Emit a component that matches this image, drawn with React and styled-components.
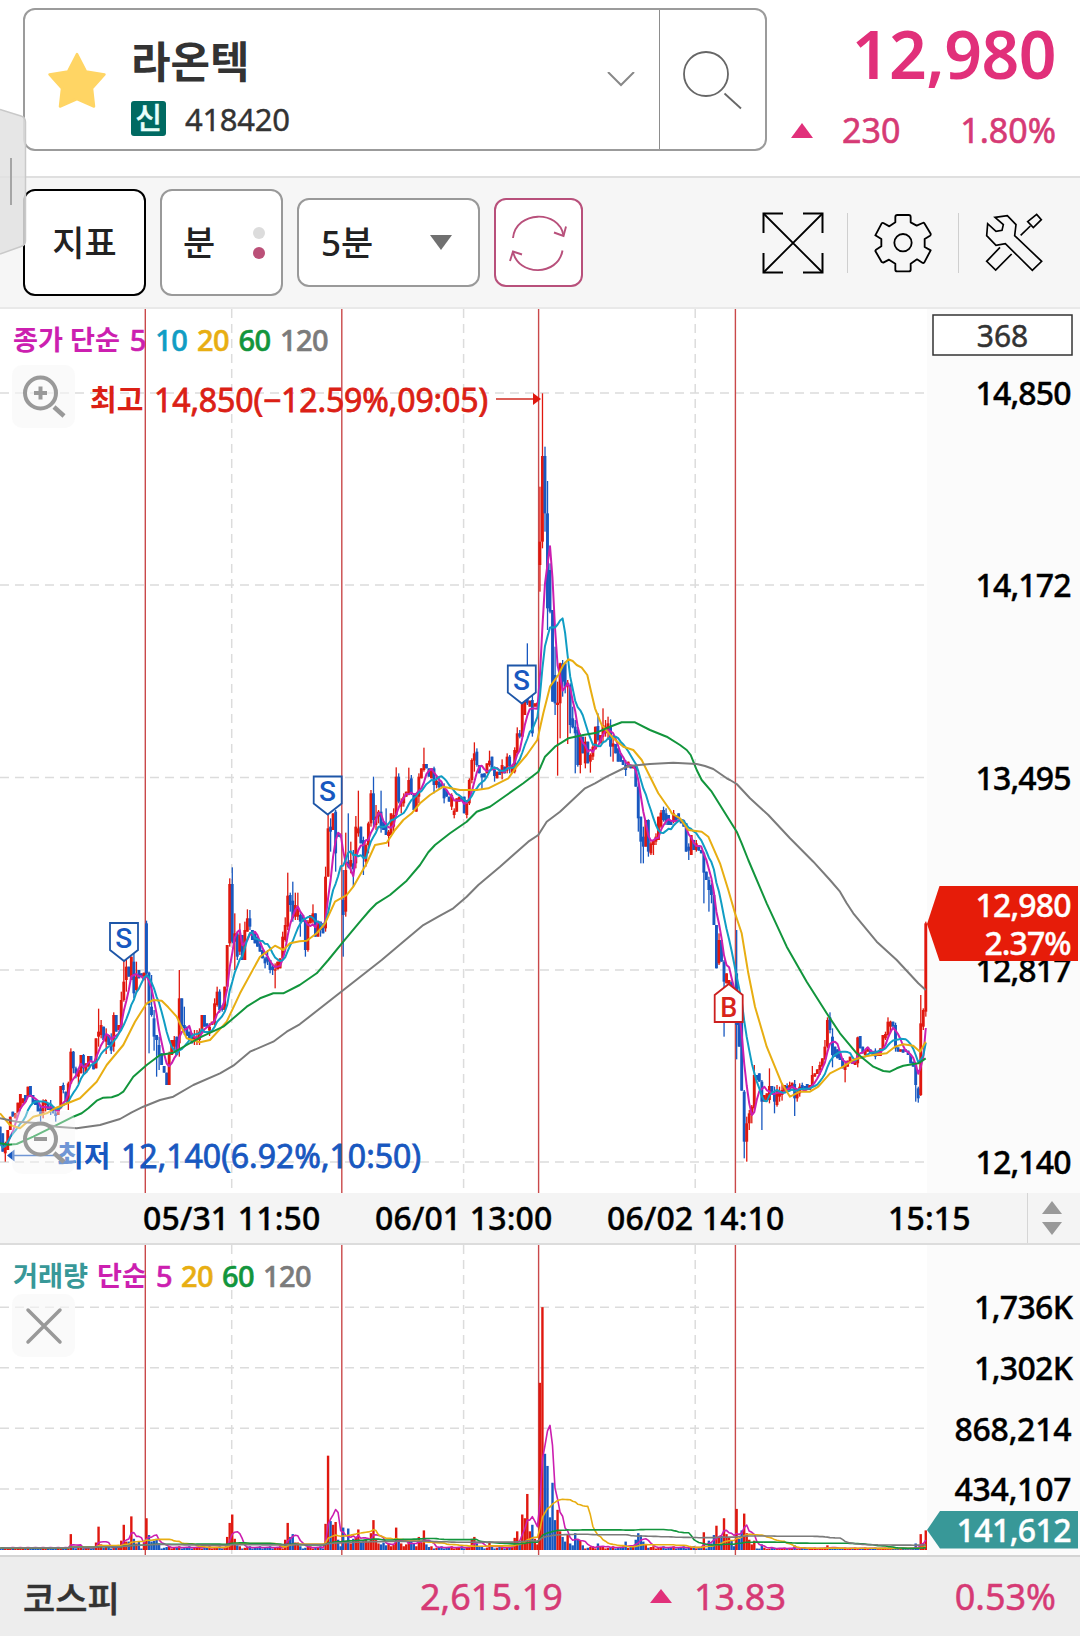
import React from 'react';
import styled, { createGlobalStyle } from 'styled-components';

const GlobalStyle = createGlobalStyle`
  * {
    box-sizing: border-box;
  }

  body {
    margin: 0;
    background: #fff;
    font-family: 'Noto Sans', 'Noto Sans CJK KR', sans-serif;
  }

  svg {
    display: block;
  }
`;

const Screen = styled.div`
  position: relative;
  display: flex;
  flex-direction: column;
  width: 1080px;
  height: 1636px;
  overflow: hidden;
  color: #333;
`;

const Header = styled.header`
  display: flex;
  height: 178px;
  padding: 8px 24px 0 23px;
  border-bottom: 2px solid #dfdfdf;
`;

const StockBox = styled.div`
  display: flex;
  width: 744px;
  height: 143px;
  border: 2px solid #9b9b9b;
  border-radius: 12px;
`;

const StockMain = styled.div`
  display: flex;
  align-items: center;
  flex: 1;
  padding: 0 24px 0 22px;
`;

const StockInfo = styled.div`
  flex: 1;
  padding: 20px 0 0 24px;
`;

const StockName = styled.h1`
  margin: 0;
  font-size: 43px;
  line-height: 58px;
  font-weight: 700;
`;

const StockCode = styled.div`
  display: flex;
  align-items: center;
  gap: 19px;
  height: 56px;
  font-size: 31px;
  letter-spacing: -0.3px;
  -webkit-text-stroke: 0.4px;
`;

const Badge = styled.span`
  width: 35px;
  height: 35px;
  border-radius: 3px;
  background: #006a62;
  color: #e9fffb;
  font-size: 29px;
  line-height: 33px;
  font-weight: 500;
  text-align: center;
`;

const SearchButton = styled.div`
  display: flex;
  align-items: center;
  justify-content: center;
  width: 106px;
  padding-right: 2px;
  border-left: 1px solid #8d8d8d;
`;

const Quote = styled.div`
  flex: 1;
  color: #e1307a;
  text-align: right;
`;

const Price = styled.div`
  height: 88px;
  font-size: 66px;
  line-height: 90px;
  font-weight: 600;
  letter-spacing: -0.5px;
`;

const Change = styled.div`
  display: flex;
  align-items: center;
  height: 68px;
  padding-left: 24px;
  font-size: 34px;
  color: #d63a75;
  -webkit-text-stroke: 0.6px;

  span {
    margin-left: 29px;
  }

  span:last-child {
    margin-left: auto;
  }
`;

const Toolbar = styled.div`
  display: flex;
  align-items: center;
  height: 131px;
  padding: 0 37px 0 23px;
  background: #f6f6f6;
  border-bottom: 2px solid #e9e9e9;
`;

const ToolButton = styled.div`
  display: flex;
  align-items: center;
  justify-content: ${props => props.$justify || 'center'};
  width: ${props => props.$width}px;
  height: ${props => props.$height || 107}px;
  margin-right: 14px;
  padding: ${props => props.$padding || 0};
  border: 2px solid ${props => props.$border || '#999'};
  border-radius: 12px;
  background: #fff;
  color: #222;
  font-size: 35px;
  line-height: 50px;
  font-weight: 500;
`;

const Dots = styled.div`
  display: flex;
  flex-direction: column;
  gap: 8px;
`;

const Dot = styled.i`
  width: 12px;
  height: 12px;
  border-radius: 50%;
  background: ${props => props.$color};
`;

const IconGroup = styled.div`
  display: flex;
  align-items: center;
  margin-left: auto;
`;

const Separator = styled.div`
  width: 1px;
  height: 60px;
  margin: 0 ${props => props.$right}px 0 ${props => props.$left}px;
  background: #cfcfcf;
`;

const Panel = styled.section`
  position: relative;
  height: ${props => props.$height}px;
`;

const Legend = styled.div`
  position: absolute;
  top: ${props => props.$top}px;
  left: 13px;
  display: flex;
  gap: ${props => props.$gap}px;
  line-height: 40px;
`;

const LegendItem = styled.span`
  color: ${props => props.$color};
  font-size: ${props => (props.$label ? 27.2 : 29)}px;
  font-weight: ${props => (props.$label ? 700 : 500)};
  letter-spacing: ${props => (props.$label ? 0 : -0.6)}px;
  -webkit-text-stroke: ${props => (props.$label ? 0 : 0.6)}px;
`;

const ChartButton = styled.div`
  position: absolute;
  top: ${props => props.$top}px;
  left: 12px;
  width: 63px;
  height: 63px;
  border-radius: 10px;
  background: rgba(246, 246, 246, ${props => props.$alpha || 0.6});
`;

const TimeAxis = styled.div`
  display: grid;
  grid-template-columns: 232px 232px 281px 1fr 53px;
  align-items: center;
  height: 52px;
  padding-left: 143px;
  background: #f4f4f4;
  border-bottom: 2px solid #dcdcdc;
  color: #000;
  font-size: 32px;
  font-weight: 500;
  letter-spacing: 0.15px;
  line-height: 46px;
  white-space: nowrap;
  -webkit-text-stroke: 0.4px;
`;

const Sorter = styled.div`
  display: flex;
  flex-direction: column;
  align-items: center;
  justify-content: center;
  gap: 8px;
  height: 50px;
  padding-right: 5px;
  border-left: 1px solid #d5d5d5;
`;

const Footer = styled.footer`
  display: grid;
  grid-template-columns: 397px 230px 44px 1fr auto;
  align-items: center;
  flex: 1;
  padding: 0 24px 1px 23px;
  border-top: 2px solid #d4d4d4;
  background: #ededed;
  color: #d63a75;
  font-size: 36px;
  -webkit-text-stroke: 0.5px;
`;

const IndexName = styled.span`
  color: #333;
  font-size: 35px;
  font-weight: 500;
`;

const Handle = styled.div`
  position: absolute;
  top: 108px;
  left: 0;
`;

const COLORS = {
  up: '#e0180f',
  down: '#1858c0',
  ma5: '#cc1fb0',
  ma10: '#109dc4',
  ma20: '#e8ae12',
  ma60: '#12953c',
  ma120: '#7b7b7b'
};

const STEP = 2.522;
const barX = i => 0.2 + i * STEP;

// direction, body top, body bottom, wick top, wick bottom (in thirds of a pixel below `top`)
const SESSIONS = [
  {
    top: 780,
    bars: `d 1040 1090|d 1060 1115|u 1090 1120 1085 1145|u 1050 1110|u 1010 1050|d 995 1010|u 1000 1015|u 968 1000
      |u 942 985|u 955 970|d 945 965|u 920 950|d 918 950|d 945 970|d 960 975|d 965 995|d 985 1005 975 1025|u 965 1005 958 1015
      |u 960 975 958 995|d 970 990|d 980 990 960 1005|d 985 1000|d 1000 1008 990 1025|u 985 1005|u 918 985|d 915 930 908 940|d 935 965
      |u 910 965 905 990|u 815 910 805 912|d 815 865 813 880|d 865 880 860 895|u 870 890 865 912|u 825 880|d 825 865 822 885|u 850 878
      |u 828 860|d 828 845|d 845 868|u 775 865|u 755 770 686 800|u 735 765 720 775|d 740 780|u 765 785 745 822|d 765 795
      |d 785 812 760 822|u 705 800 697 815|d 705 755|u 735 750|u 660 745 635 750|u 605 660 540 665|u 560 600 540 635|d 560 590
      |u 530 600|d 545 640 520 655|u 590 630 545 640|d 570 595|d 580 590|u 578 590|d 430 580 422 585|d 578 675 575 820
      |d 680 705 585 710|d 715 770 690 812|d 765 780 765 890|d 795 825 770 870|d 820 855|d 858 878|d 878 915|u 820 915 815 915
      |u 780 825|u 780 800 768 815|d 770 825|u 655 790 570 830|d 655 740|d 735 745 680 765|d 740 768|d 755 780|d 760 790
      |u 770 785 750 795|u 770 780 750 795|u 755 780 745 795|u 705 760|d 705 740|d 730 740|u 740 752 730 768|u 725 735|u 670 730 655 735
      |u 635 675 620 680|d 635 690 628 698|d 680 690 675 695|u 620 690|u 495 620|u 312 490 295 500|d 312 485 262 490
      |u 460 485 400 570|d 460 530 460 540|u 465 515 430 525|d 465 540|u 450 540 425 540|u 415 455 388 455|d 415 440 390 450
      |d 450 480|d 460 490|d 470 500|d 490 515|d 510 535|d 535 550 530 565|d 530 545 510 555|d 540 570 540 580|d 560 570 550 585
      |u 568 572 550 625|u 545 568|u 535 565|u 470 535 455 540|u 435 480 412 485|u 347 440 278 450|d 345 375 338 395|d 362 415 305 425
      |u 375 410 338 420|u 385 410 338 420`
  },
  {
    top: 640,
    bars: `d 825 845 820 890|d 825 845|d 840 930 835 950|u 845 930 840 935|u 825 850|u 820 845 793 850|d 820 890|u 845 890
      |d 845 870 845 890|d 850 880|u 710 865 680 875|u 565 710 520 710|d 560 575 535 635|u 520 570|d 515 640 510 695|d 580 590 |d 585 592
      |d 780 825 690 950|u 690 815 578 830|d 665 680 520 685|u 660 680 605 700|d 670 688 630 740|u 560 670 528 685|u 565 580 452 590
      |d 560 610|d 600 655 590 705|u 615 665 610 680|u 550 615 545 640|u 460 550 450 560|d 460 540 410 560|u 530 555 495 570|u 515 530 510 550
      |d 515 565 452 578|d 545 570|d 560 585 505 585|u 575 588 570 620|u 520 585|u 525 560 505 575|u 410 525 382 530|d 410 485 400 490
      |u 485 500 475 520|u 470 490 460 500|u 455 470|u 420 460 383 465|d 415 460 405 465|d 465 510|u 460 515|u 410 470 400 490|u 385 415
      |u 372 390 323 395|d 372 385|d 385 410|u 385 415|d 385 435 380 460|u 422 435 405 445|d 425 442 410 450|d 430 440
      |d 445 475 430 490|d 450 470|d 470 485|u 465 500 460 510|u 512 525 505 535|u 475 515|u 470 485|d 472 482|d 470 520
      |u 490 525 480 535|u 420 490 415 495|u 360 420 355 430|u 340 362 307 395|d 335 375 325 380|d 375 400|d 402 412 400 450|d 400 412
      |u 370 400|u 362 375 332 380|d 350 385|d 390 408 380 425|u 395 415|d 395 405|u 375 400 358 418|d 380 400|u 350 392 340 400
      |d 350 378 345 400|u 378 398|u 330 395 322 400|u 280 340 262 345|d 280 290 270 295|u 190 290|u 185 225|d 175 190 10 195
      |u 182 200|d 180 280 165 290|u 190 200|u 188 200`
  },
  {
    top: 380,
    bars: `u 485 555 320 635|u 228 485 40 505|d 228 400 200 455|d 400 685 303 750|d 570 695 550 700|d 690 965|d 885 970 800 1005
      |u 968 975 905 1187|u 850 970 848 1075|d 850 905 840 950|d 850 920 845 940|u 908 918 900 1092|d 915 1035 910 1060|d 1015 1042 980 1045
      |d 1040 1060 1020 1180|d 1050 1155 1045 1160|u 1065 1155 1060 1180|d 1070 1120|u 1085 1150 1070 1165|d 1085 1150|u 1125 1145 1120 1178
      |u 1100 1130 1090 1140|u 1040 1108|d 1038 1080 1000 1085|u 1065 1090|u 1035 1070 985 1090|u 1040 1060 1020 1070
      |u 1030 1050 1010 1080|d 1040 1100 1018 1130|u 1090 1100 1065 1145|d 1092 1120|d 1105 1145|d 1120 1145|d 1140 1155|d 1155 1170 1140 1188
      |u 1145 1162|d 1155 1165|u 1155 1165|d 1158 1220|d 1220 1315 1210 1355|d 1310 1385 1310 1450|d 1370 1400 1340 1450
      |u 1320 1400|d 1320 1415 1318 1430|u 1390 1420 1385 1425|u 1380 1395 1380 1425|u 1370 1385 1360 1395|u 1310 1380|u 1298 1340 1290 1345
      |d 1290 1320 1280 1325|d 1300 1325 1285 1335|d 1305 1335|d 1320 1335|u 1300 1325 1290 1330|d 1305 1320|d 1300 1318|d 1318 1330
      |d 1320 1340|d 1330 1415|d 1400 1412 1390 1440|u 1365 1425|d 1380 1410|u 1390 1410 1380 1415|d 1395 1412|d 1410 1420`
  },
  {
    top: 780,
    bars: `d 220 278 215 370|d 275 300|d 300 330 290 395|d 315 345 310 370|d 345 435|d 435 565|u 480 550 460 555|d 480 545|d 545 605 540 770
      |u 580 610|u 600 620|d 605 640|d 625 700|d 580 735 450 838|d 690 800|d 720 932|d 935 1085 930 1135|u 1030 1085 1010 1145|u 1000 1030 990 1050
      |u 980 1005 975 1030|u 885 985 855 990|d 885 900|d 880 905|d 905 965 900 1050|u 945 965|u 940 960|u 918 960 865 970|d 918 940
      |d 940 965 920 1000|u 930 975 915 980|u 935 950 920 965|u 930 945 910 962|u 915 935|d 918 930 910 935|u 915 930 905 935|u 908 925
      |d 912 955 900 1008|u 935 955 930 965|u 920 940 910 950|d 915 925 908 930|d 918 928|d 912 930|u 915 930|u 885 918 858 920|u 880 890
      |u 868 882|u 855 870 845 885|u 835 860|u 800 838 780 840|u 720 800 712 805|d 712 750 697 760|d 770 825 745 862|d 800 830|d 808 835
      |d 820 840|d 835 865|u 855 870 845 907|u 842 860|u 830 845|d 840 852|u 840 855|u 772 850 770 862|d 768 805|d 800 820|u 810 825
      |u 802 815|d 808 820|d 815 825|d 812 830 805 838|u 815 828|u 805 828|u 765 808|u 762 775 755 780|u 725 765 712 770|u 725 740 722 760
      |d 725 740|d 735 805 728 815|d 802 815|u 808 815|d 808 818|d 808 815|d 812 825|d 825 850|d 845 860|d 855 915 850 965|d 925 955 920 968
      |u 730 945 645 948|u 690 740 685 750|u 430 695 425 710`
  }
];

const candles = SESSIONS.flatMap(({ top, bars }) =>
  bars.split('|').map(row => {
    const [dir, ...rest] = row.trim().split(/\s+/);
    const [a, b, hi = a, lo = b] = rest.map(v => top + Number(v) / 3);
    return { up: dir === 'u', top: a, bottom: b, high: hi, low: lo, close: dir === 'u' ? a : b };
  })
);

const average = (values, period) =>
  values
    .map((_, i) => {
      const part = values.slice(Math.max(0, i - period + 1), i + 1);
      return part.reduce((sum, v) => sum + v, 0) / part.length;
    });

const toPoints = values => values.map((v, i) => `${barX(i).toFixed(1)},${v.toFixed(1)}`).join(' ');

// long averages reach back before the first visible bar, so they come as points
const LONG_LINES = {
  ma20: [
    [0, 780, '0,1000 30,1035 60,1045 100,1010 140,1000 165,985 240,955 290,905 320,855 370,795 405,725 440,670 460,660 485,662 505,682 530,710 560,775 600,787 630,780 680,725 720,640 780,530 825,497 850,510 870,490 899,484'],
    [280, 640, '80,902 110,880 135,850 165,785 200,765 220,740 260,670 285,615 320,608 345,570 370,540 395,520 420,490 450,465 490,440 540,450 590,450 625,445 685,415 710,380 740,345 772,300'],
    [500, 380, '130,1000 150,920 175,885 190,855 205,838 218,843 230,855 245,863 262,885 272,930 285,985 305,1035 340,1075 370,1100 400,1110 425,1140 445,1180 475,1240 510,1290'],
    [640, 780, '95,100 120,115 145,150 185,155 205,170 240,250 265,330 285,400 305,460 325,580 345,680 380,800 425,910 450,950 480,935 510,935 535,920 570,880 610,860 640,840 670,830 700,825 740,820 765,800 790,793 820,797 840,815 857,785']
  ],
  ma60: [
    [0, 780, '0,1090 25,1094 50,1092 100,1070 150,1045 220,1010 245,1000 265,985 290,962 310,953 335,952 355,945 370,935 400,890 440,855 480,825 520,818 560,795 605,770 670,740 700,715 740,680 780,655 820,640 850,640 899,615'],
    [280, 640, '110,1000 145,960 190,905 240,845 270,810 290,790 330,765 380,722 420,675 445,637 465,615 510,580 560,545 590,515 630,500 680,465 730,430 775,395'],
    [500, 380, '122,1160 135,1130 165,1100 205,1075 250,1065 290,1058 330,1040 365,1027 405,1027 450,1050 500,1070 540,1095 560,1110 572,1125 590,1170'],
    [640, 780, '185,0 215,35 290,155 305,190 325,240 380,370 440,500 500,605 560,700 600,760 650,820 700,860 730,873 750,875 770,865 790,857 835,850 857,835']
  ],
  ma120: [
    [0, 780, '0,1015 50,1025 120,1030 170,1040 230,1045 300,1035 360,1017 395,997 430,980 480,960 520,950 580,915 660,880 700,857 750,815 820,785 860,755 899,733'],
    [280, 640, '305,960 370,905 430,855 475,830 520,805 560,770 595,735 660,680 745,605 775,585 800,545 840,515 899,460'],
    [500, 380, '255,1225 285,1210 320,1190 385,1158 450,1152 520,1148 590,1152 615,1158 640,1167 680,1195'],
    [640, 780, '270,0 290,12 330,55 385,105 450,175 520,245 570,300 600,335 620,370 640,400 710,485 770,540 835,610 857,630']
  ]
};

const joinPieces = pieces =>
  pieces
    .flatMap(([x0, y0, text]) =>
      text.split(' ').map(pair => {
        const [x, y] = pair.split(',').map(Number);
        return `${(x0 + x / 3).toFixed(1)},${(y0 + y / 3).toFixed(1)}`;
      })
    )
    .join(' ');

const VOLUME_PEAKS = {
  28: 17, 38: 8, 39: 25, 40: 6, 48: 10, 49: 27, 50: 9, 51: 9, 52: 36, 53: 12, 54: 7, 55: 9, 57: 8, 58: 34, 59: 16, 60: 9, 61: 10, 62: 12,
  63: 7, 90: 14, 91: 29, 92: 38, 93: 12, 94: 5, 113: 11, 114: 29, 115: 14, 116: 17, 117: 8, 118: 8, 129: 28, 130: 101, 131: 31, 132: 27,
  133: 30, 134: 11, 135: 4, 136: 24, 137: 10, 138: 23, 139: 7, 140: 12, 141: 13, 142: 22, 143: 9, 144: 10, 145: 11, 146: 9, 147: 18, 148: 32,
  149: 12, 150: 7, 157: 24, 158: 9, 162: 9, 163: 9, 164: 7, 166: 14, 168: 21, 169: 6, 187: 12, 188: 14, 189: 7, 194: 9, 204: 13, 205: 20, 206: 8,
  207: 38, 208: 34, 209: 60, 210: 20, 211: 27, 212: 12, 213: 6, 214: 179, 215: 260, 216: 103, 217: 90, 218: 35, 219: 72, 220: 32, 221: 43,
  222: 20, 223: 14, 224: 9, 225: 17, 226: 7, 227: 5, 228: 18, 229: 11, 230: 10, 231: 5, 237: 7, 248: 9, 252: 11, 253: 18, 254: 16, 255: 9,
  256: 6, 279: 19, 281: 10, 282: 7, 283: 16, 284: 26, 285: 13, 286: 15, 287: 34, 288: 17, 289: 13, 290: 10, 292: 44, 293: 12, 294: 21, 295: 39,
  296: 18, 297: 11, 298: 6, 299: 10, 302: 6, 315: 5, 328: 5, 363: 7, 365: 17, 366: 7, 367: 21
};

const RED_VOLUME = [28, 39, 52, 58, 92, 133, 148, 157, 168, 188, 209, 279, 284, 287, 292, 295];

const volumes = candles.map((_, i) => {
  if (VOLUME_PEAKS[i]) return VOLUME_PEAKS[i];
  if (i < 36) return 1.8 + (i % 3) * 0.6;
  if (i > 300) return 1 + (i % 4) * 0.5;
  if (i > 135 && i < 170) return 4 + ((i * 7) % 5);
  return 1.6 + ((i * 5) % 4) * 0.8;
});

const VOLUME_BASE = 1550;
const volumeY = v => VOLUME_BASE - v * 0.934;

const DAY_LINES = [145.3, 341.8, 538.6, 735.4];
const TIME_LINES = [231.7, 463.6, 695.2];

const GridLines = ({ rows, top, bottom }) => (
  <g stroke="#dcdcdc" strokeWidth="1.5" strokeDasharray="9 6">
    {rows.map(y => <line key={y} x1="0" x2="927" y1={y} y2={y} />)}
    {TIME_LINES.map(x => <line key={x} x1={x} x2={x} y1={top} y2={bottom} />)}
  </g>
);

const DayLines = ({ top, bottom }) => (
  <g stroke="#c9494a" strokeWidth="1.4">
    {DAY_LINES.map(x => <line key={x} x1={x} x2={x} y1={top} y2={bottom} />)}
  </g>
);

const Line = ({ points, color, width = 2 }) => (
  <polyline points={points} fill="none" stroke={color} strokeWidth={width} strokeLinejoin="round" />
);

const AxisText = ({ y, children, right = 1071.5, length = 96, color = '#000' }) => (
  <text x={right - length} y={y} fontSize="32" fontWeight="500" fill={color} stroke={color} strokeWidth="0.4" textLength={length}>
    {children}
  </text>
);

const SellMark = ({ x, y }) => (
  <g>
    <path d={`M${x - 14} ${y} h28 v27 l-14 11 l-14 -11 z`} fill="#fff" stroke="#1e56a8" strokeWidth="1.8" />
    <text x={x - 0.3} y={y + 24.5} fontSize="28" fontWeight="500" textAnchor="middle" fill={COLORS.down} fontFamily="Roboto, sans-serif">S</text>
  </g>
);

const BuyMark = ({ x, y }) => (
  <g>
    <path d={`M${x} ${y} l14 11 v27 h-28 v-27 z`} fill="#fff" stroke="#cc2020" strokeWidth="1.8" />
    <text x={x} y={y + 33} fontSize="27" fontWeight="500" textAnchor="middle" fill="#d8241b" fontFamily="Roboto, sans-serif">B</text>
  </g>
);

const PriceChart = () => {
  const closes = candles.map(c => c.close);

  return (
    <svg width="1080" height="884" viewBox="0 309 1080 884">
      <GridLines rows={[393, 585, 777.5, 970, 1162]} top={309} bottom={1193} />
      <rect x="927" y="309" width="153" height="884" fill="#fbfbfb" />
      <DayLines top={309} bottom={1193} />
      {candles.map((c, i) => (
        <g key={i} fill={c.up ? COLORS.up : COLORS.down}>
          <rect x={barX(i) - 0.6} y={c.high} width="1.3" height={c.low - c.high} />
          <rect x={barX(i) - 1.45} y={c.top} width="2.9" height={Math.max(1, c.bottom - c.top)} />
        </g>
      ))}
      <Line points={toPoints(average(closes, 5))} color={COLORS.ma5} />
      <Line points={toPoints(average(closes, 10))} color={COLORS.ma10} />
      <Line points={joinPieces(LONG_LINES.ma20)} color={COLORS.ma20} />
      <Line points={joinPieces(LONG_LINES.ma60)} color={COLORS.ma60} />
      <Line points={joinPieces(LONG_LINES.ma120)} color={COLORS.ma120} />

      <text x="90" y="411" fontSize="29" fontWeight="700" fill="#db2015">최고</text>
      <text x="154" y="412" fontSize="32" fill="#db2015" stroke="#db2015" strokeWidth="0.8" textLength="334">14,850(−12.59%,09:05)</text>
      <path d="M496 399 H534" stroke="#d02a20" strokeWidth="1.4" />
      <path d="M533 393 L541 399 L533 405 Z" fill="#e0180f" />

      <text x="57" y="1167" fontSize="29" fontWeight="700" fill={COLORS.down}>최저</text>
      <text x="121" y="1168" fontSize="32" fill={COLORS.down} stroke={COLORS.down} strokeWidth="0.8" textLength="300">12,140(6.92%,10:50)</text>
      <path d="M14 1155.5 H54" stroke={COLORS.down} strokeWidth="1.4" />
      <path d="M14.5 1149.5 L7 1155.5 L14.5 1161.5 Z" fill={COLORS.down} />

      <SellMark x={124} y={923} />
      <SellMark x={327.7} y={776.5} />
      <SellMark x={521.8} y={665.5} />
      <BuyMark x={728.7} y={984} />

      <rect x="933" y="315" width="139" height="40" fill="#fff" stroke="#333" strokeWidth="1.5" />
      <text x="1002.5" y="347" fontSize="30" textAnchor="middle" fill="#333" stroke="#333" strokeWidth="0.5">368</text>
      <AxisText y={404.5}>14,850</AxisText>
      <AxisText y={597}>14,172</AxisText>
      <AxisText y={789.5}>13,495</AxisText>
      <AxisText y={981.5}>12,817</AxisText>
      <AxisText y={1173.5}>12,140</AxisText>
      <path d="M927 924 L939.5 886 H1078 V961 H939.5 Z" fill="#e61c09" />
      <AxisText y={916.5} color="#fff">12,980</AxisText>
      <AxisText y={954.5} color="#fff" length={87}>2.37%</AxisText>
    </svg>
  );
};

const VolumeChart = () => (
  <svg width="1080" height="310" viewBox="0 1245 1080 310">
    <GridLines rows={[1307.3, 1367.7, 1428.3, 1489]} top={1245} bottom={1555} />
    <rect x="927" y="1245" width="153" height="310" fill="#fbfbfb" />
    <DayLines top={1245} bottom={1555} />
    {volumes.map((v, i) => (
      <rect
        key={i}
        x={barX(i) - 1.2}
        y={volumeY(v)}
        width="2.4"
        height={VOLUME_BASE - volumeY(v)}
        fill={candles[i].up || RED_VOLUME.includes(i) ? COLORS.up : COLORS.down}
      />
    ))}
    <Line points={toPoints(average(volumes, 5).map(volumeY))} color={COLORS.ma5} width={1.6} />
    <Line points={toPoints(average(volumes, 20).map(volumeY))} color={COLORS.ma20} width={1.6} />
    <Line points={toPoints(average(volumes, 60).map(volumeY))} color={COLORS.ma60} width={1.6} />
    <Line points={toPoints(average(volumes, 120).map(volumeY))} color={COLORS.ma120} width={1.6} />
    <AxisText y={1319} right={1073} length={99}>1,736K</AxisText>
    <AxisText y={1380} right={1073} length={99}>1,302K</AxisText>
    <AxisText y={1441} length={117}>868,214</AxisText>
    <AxisText y={1501} length={117}>434,107</AxisText>
    <path d="M927 1530 L940 1511 H1078 V1548.5 H940 Z" fill="#389898" />
    <AxisText y={1541.5} length={115} color="#fff">141,612</AxisText>
  </svg>
);

const Triangle = ({ width, height, color, down }) => (
  <svg width={width} height={height}>
    <path d={down ? `M0 0 H${width} L${width / 2} ${height} Z` : `M0 ${height} H${width} L${width / 2} 0 Z`} fill={color} />
  </svg>
);

const StarIcon = () => (
  <svg width="60" height="58" viewBox="0 0 60 58">
    <path
      d="M30 3 L39 20.5 L57.5 23.5 L45 37.5 L47 55.5 L30 48 L13 55.5 L15 37.5 L2.5 23.5 L21 20.5 Z"
      fill="#ffd564"
      stroke="#ffd564"
      strokeWidth="2.5"
      strokeLinejoin="round"
    />
  </svg>
);

const SearchIcon = () => (
  <svg width="60" height="60" viewBox="0 0 60 60" fill="none" stroke="#666" strokeWidth="1.8">
    <circle cx="24" cy="24" r="22" />
    <path d="M42.5 43.5 L59 58.5" />
  </svg>
);

const RefreshIcon = () => (
  <svg width="60" height="58" viewBox="510 213.5 60 58" fill="none" stroke="#b8507b" strokeWidth="1.9">
    <path d="M514 237.5 C517 210 560 209 564.5 235" />
    <path d="M555 232 L564.5 235.5 L567 226" />
    <path d="M563.5 250 C559 276 519 276 514 251" />
    <path d="M511 260.5 L514 251 L523 254" />
  </svg>
);

const ExpandIcon = () => (
  <svg width="62" height="62" viewBox="0 0 62 62" fill="none" stroke="#000" strokeWidth="2">
    <path d="M1.5 21 V1.5 H21 M41 1.5 H60.5 V21 M60.5 41 V60.5 H41 M21 60.5 H1.5 V41" />
    <path d="M1.5 1.5 L60.5 60.5 M60.5 1.5 L1.5 60.5" strokeWidth="1.8" />
  </svg>
);

const GearIcon = () => (
  <svg width="58" height="60" viewBox="940 640 174 180" fill="none" stroke="#000" strokeWidth="5.5" strokeLinejoin="round">
    <path d="M1004 668 V652 q0-6 6-6 H1044 q6 0 6 6 V668 L1068 678 L1086 670 q3-2 5 1 L1110 702 q1 4-2 6 L1092 718 V742 L1110 752 L1091 788 q-3 3-6 1 L1069 779 L1050 792 V810 q0 5-6 5 H1010 q-6 0-6-5 V792 L985 780 L968 789 L963 787 L944 754 L946 750 L962 740 V718 L944 707 L963 671 q2-2 5-1 L986 680 Z" />
    <circle cx="1027" cy="729" r="26" />
  </svg>
);

const ToolsIcon = () => (
  <svg width="58" height="60" viewBox="1275 640 174 180" fill="none" stroke="#000" strokeWidth="5">
    <path d="M1305 653 L1342 648 L1368 675 L1364 708 L1445 785 L1417 812 L1336 732 L1308 737 L1280 708 L1283 672 L1308 695 L1326 692 L1330 675 Z" />
    <path d="M1382 707 L1411 679" />
    <path d="M1403 666 L1430 644 L1444 660 L1420 684 Z" />
    <path d="M1320 743 L1280 785 L1307 811 L1355 763" />
  </svg>
);

const ZoomIcon = ({ plus }) => (
  <svg width="63" height="63" viewBox="0 0 63 63" fill="none" stroke="#999" strokeWidth="4">
    <circle cx="28.5" cy="28" r="15.5" />
    <path d={plus ? 'M22 28 H35 M28.5 21.5 V34.5' : 'M22 28 H35'} />
    <path d="M42 42 L52 51" strokeWidth="4.5" />
  </svg>
);

const App = () => {
  return (
    <Screen>
      <GlobalStyle />
      <Header>
        <StockBox>
          <StockMain>
            <StarIcon />
            <StockInfo>
              <StockName>라온텍</StockName>
              <StockCode>
                <Badge>신</Badge>
                418420
              </StockCode>
            </StockInfo>
            <svg width="28" height="16" viewBox="0 0 28 16" fill="none" stroke="#888" strokeWidth="2">
              <path d="M1 0 L14 13 L27 0" />
            </svg>
          </StockMain>
          <SearchButton>
            <SearchIcon />
          </SearchButton>
        </StockBox>
        <Quote>
          <Price>12,980</Price>
          <Change>
            <Triangle width={22} height={15} color="#e1307a" />
            <span>230</span>
            <span>1.80%</span>
          </Change>
        </Quote>
      </Header>

      <Toolbar>
        <ToolButton $width={123} $border="#000">
          <span>지표</span>
        </ToolButton>
        <ToolButton $width={123} $justify="space-between" $padding="0 16px 0 21px">
          <span>분</span>
          <Dots>
            <Dot $color="#dcdcdc" />
            <Dot $color="#bb5078" />
          </Dots>
        </ToolButton>
        <ToolButton $width={183} $height={89} $justify="space-between" $padding="0 26px 0 22px">
          <span>5분</span>
          <Triangle width={22} height={15} color="#707070" down />
        </ToolButton>
        <ToolButton $width={89} $height={89} $border="#b8507b">
          <RefreshIcon />
        </ToolButton>
        <IconGroup>
          <ExpandIcon />
          <Separator $left={23} $right={26} />
          <GearIcon />
          <Separator $left={26} $right={26} />
          <ToolsIcon />
        </IconGroup>
      </Toolbar>

      <Panel $height={884}>
        <PriceChart />
        <Legend $top={11} $gap={9.6}>
          <LegendItem $label $color={COLORS.ma5}>종가 단순</LegendItem>
          <LegendItem $color={COLORS.ma5}>5</LegendItem>
          <LegendItem $color={COLORS.ma10}>10</LegendItem>
          <LegendItem $color={COLORS.ma20}>20</LegendItem>
          <LegendItem $color={COLORS.ma60}>60</LegendItem>
          <LegendItem $color={COLORS.ma120}>120</LegendItem>
        </Legend>
        <ChartButton $top={56}>
          <ZoomIcon plus />
        </ChartButton>
        <ChartButton $top={802} $alpha={0.4}>
          <ZoomIcon />
        </ChartButton>
      </Panel>

      <TimeAxis>
        <span>05/31 11:50</span>
        <span>06/01 13:00</span>
        <span>06/02 14:10</span>
        <span>15:15</span>
        <Sorter>
          <Triangle width={20} height={13} color="#999" />
          <Triangle width={20} height={13} color="#999" down />
        </Sorter>
      </TimeAxis>

      <Panel $height={310}>
        <VolumeChart />
        <Legend $top={11} $gap={9}>
          <LegendItem $label $color="#389898">거래량</LegendItem>
          <LegendItem $label $color={COLORS.ma5}>단순</LegendItem>
          <LegendItem $color={COLORS.ma5}>5</LegendItem>
          <LegendItem $color={COLORS.ma20}>20</LegendItem>
          <LegendItem $color={COLORS.ma60}>60</LegendItem>
          <LegendItem $color={COLORS.ma120}>120</LegendItem>
        </Legend>
        <ChartButton $top={49}>
          <svg width="63" height="63" viewBox="0 0 63 63" stroke="#999" strokeWidth="3.5" strokeLinecap="round">
            <path d="M16 16 L48 48 M48 16 L16 48" />
          </svg>
        </ChartButton>
      </Panel>

      <Footer>
        <IndexName>코스피</IndexName>
        <span>2,615.19</span>
        <Triangle width={22} height={14} color="#e1307a" />
        <span>13.83</span>
        <span>0.53%</span>
      </Footer>

      <Handle>
        <svg width="27" height="148" viewBox="0 0 27 148">
          <path d="M0 1.5 L21 8 Q25.5 9.5 25.5 14 V133 Q25.5 137 21 138.5 L0 146" fill="rgba(226,226,226,0.85)" stroke="#c9c9c9" strokeWidth="1.5" />
          <path d="M11 50 V97" stroke="#a5a5a5" strokeWidth="2" />
        </svg>
      </Handle>
    </Screen>
  );
};

export default App;
